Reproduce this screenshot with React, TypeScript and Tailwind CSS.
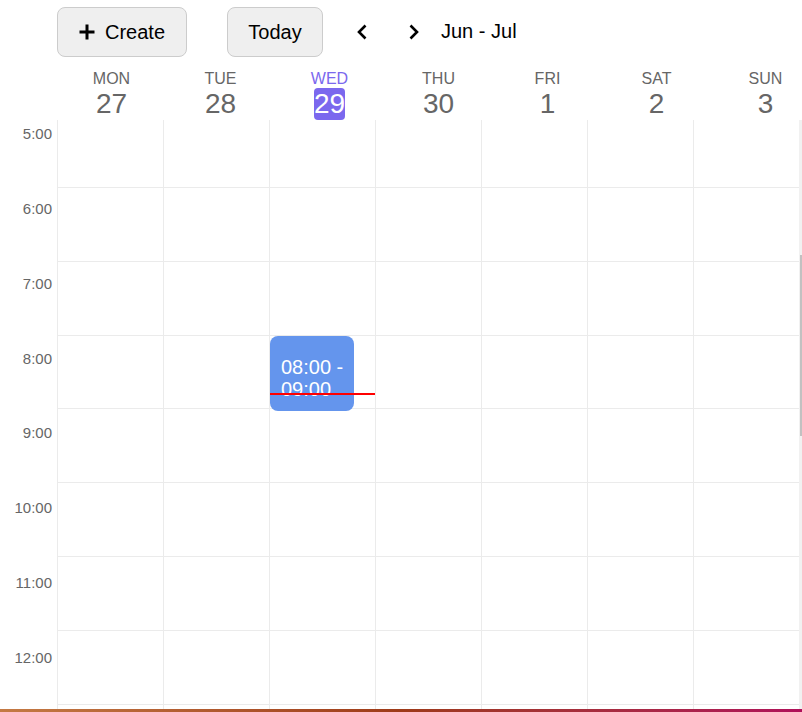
import React from 'react';

const days = [
  { name: 'MON', date: '27' },
  { name: 'TUE', date: '28' },
  { name: 'WED', date: '29', today: true },
  { name: 'THU', date: '30' },
  { name: 'FRI', date: '1' },
  { name: 'SAT', date: '2' },
  { name: 'SUN', date: '3' },
];

const hours = [5, 6, 7, 8, 9, 10, 11, 12];

const PlusIcon = () => (
  <svg width="16" height="16" viewBox="0 0 16 16" className="shrink-0">
    <path d="M8 0.5v15M0.5 8h15" stroke="#000" strokeWidth="3" strokeLinecap="butt" />
  </svg>
);

const Chevron = ({ dir }: { dir: 'left' | 'right' }) => (
  <svg width="12" height="16" viewBox="0 0 12 16">
    <path
      d={dir === 'left' ? 'M9.5 1.5L3 8l6.5 6.5' : 'M2.5 1.5L9 8l-6.5 6.5'}
      stroke="#000"
      strokeWidth="2.6"
      fill="none"
      strokeLinecap="butt"
      strokeLinejoin="miter"
    />
  </svg>
);

export default function App() {
  return (
    <div
      className="w-[802px] h-[712px] bg-white overflow-hidden flex flex-col"
      style={{ fontFamily: '"Liberation Sans", Arial, sans-serif' }}
    >
      {/* toolbar */}
      <div className="h-[70px] shrink-0 flex items-start pt-[7px] pl-[57px]">
        <button className="w-[130px] h-[50px] rounded-[8px] border border-[#cccccc] bg-[#efefef] flex items-center justify-center gap-[10px] text-[20px] text-black">
          <PlusIcon />
          <span>Create</span>
        </button>
        <button className="ml-[40px] w-[96px] h-[50px] rounded-[8px] border border-[#cccccc] bg-[#efefef] flex items-center justify-center text-[20px] text-black">
          Today
        </button>
        <div className="h-[50px] flex items-center">
          <button className="ml-[33px] flex items-center">
            <Chevron dir="left" />
          </button>
          <button className="ml-[40px] flex items-center">
            <Chevron dir="right" />
          </button>
          <span className="ml-[21px] text-[20px] text-black -mt-[2px]">Jun - Jul</span>
        </div>
      </div>

      {/* day header */}
      <div className="h-[50px] shrink-0 grid grid-cols-[57px_repeat(7,109px)]">
        <div />
        {days.map((d) => (
          <div key={d.name} className="flex flex-col items-center">
            <span
              className={`text-[16px] leading-[18px] ${d.today ? 'text-[#7b68ee]' : 'text-[#666666]'}`}
            >
              {d.name}
            </span>
            <span
              className={`text-[28px] leading-[32px] ${
                d.today ? 'bg-[#7b68ee] text-white rounded-[4px]' : 'text-[#666666]'
              }`}
            >
              {d.date}
            </span>
          </div>
        ))}
      </div>

      {/* body */}
      <div className="flex-1 min-h-0 flex overflow-hidden">
        <div className="w-[799px] overflow-hidden">
          <div className="-mt-[6px] grid grid-cols-[57px_repeat(7,106px)]">
            <div className="flex flex-col">
              {hours.map((h) => (
                <div key={h} className="h-[74.86px] shrink-0 text-right pr-[5px] pt-[11px] text-[15px] leading-[17px] text-[#666666]">
                  {h}:00
                </div>
              ))}
            </div>
            {days.map((d) => (
              <div key={d.name} className="relative flex flex-col border-l border-[#ebebeb]">
                {[...hours, 13].map((h) => (
                  <div key={h} className="h-[73.86px] shrink-0 border-b border-[#ebebeb]" />
                ))}
                {d.today && (
                  <>
                    <div className="absolute top-[222px] left-0 w-[84px] h-[75px] rounded-[8px] bg-[#6495ed] pl-[11px] pt-[20px] text-white text-[20px] leading-[22px] whitespace-nowrap">
                      08:00 -
                      <br />
                      09:00
                    </div>
                    <div className="absolute top-[279px] left-0 right-0 h-[2px] bg-[#ff0000]" />
                  </>
                )}
              </div>
            ))}
          </div>
        </div>
        <div className="w-[3px] bg-[#f1f1f1] flex justify-end">
          <div className="mt-[135px] w-[2px] h-[181px] bg-[#c1c1c1]" />
        </div>
      </div>

      <div className="h-[3px] shrink-0 bg-gradient-to-r from-[#c47a44] via-[#9e3a18] to-[#b0105a]" />
    </div>
  );
}
